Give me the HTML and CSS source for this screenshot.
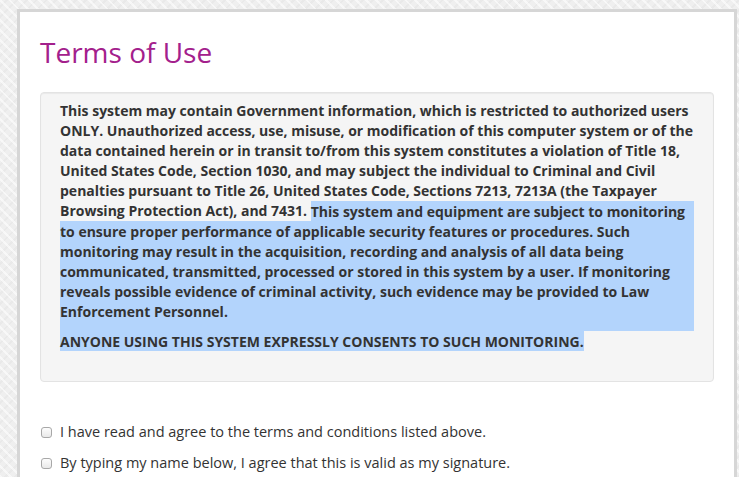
FILE: index.html
```html
<!DOCTYPE html>
<html>
<head>
<meta charset="utf-8">
<link rel="stylesheet" href="styles.css">
</head>
<body>
<div class="panel">
  <h1 class="title">Terms of Use</h1>
  <div class="well">
    <div class="sel sel-a"></div>
    <div class="sel sel-b"></div>
    <p class="terms">This system may contain Government information, which is restricted to authorized users<br>ONLY. Unauthorized access, use, misuse, or modification of this computer system or of the<br>data contained herein or in transit to/from this system constitutes a violation of Title 18,<br>United States Code, Section 1030, and may subject the individual to Criminal and Civil<br>penalties pursuant to Title 26, United States Code, Sections 7213, 7213A (the Taxpayer<br>Browsing Protection Act), and 7431. <span class="hl">This system and equipment are subject to monitoring<br>to ensure proper performance of applicable security features or procedures. Such<br>monitoring may result in the acquisition, recording and analysis of all data being<br>communicated, transmitted, processed or stored in this system by a user. If monitoring<br>reveals possible evidence of criminal activity, such evidence may be provided to Law<br>Enforcement Personnel.</span></p>
    <p class="terms"><span class="hl">ANYONE USING THIS SYSTEM EXPRESSLY CONSENTS TO SUCH MONITORING.</span></p>
  </div>
  <div class="checks">
    <label class="check"><input type="checkbox" class="box"><span>I have read and agree to the terms and conditions listed above.</span></label>
    <label class="check"><input type="checkbox" class="box"><span>By typing my name below, I agree that this is valid as my signature.</span></label>
  </div>
</div>
</body>
</html>
```

FILE: styles.css
```css
html, body {
  margin: 0;
  padding: 0;
}
body {
  background-color: #efefef;
  background-image:
    repeating-linear-gradient(45deg, rgba(255,255,255,0.55) 0 2px, transparent 2px 7px),
    repeating-linear-gradient(-45deg, rgba(0,0,0,0.025) 0 2px, transparent 2px 7px);
  font-family: "Open Sans", "DejaVu Sans", sans-serif;
  color: #333;
  height: 477px;
  overflow: hidden;
}
.panel {
  margin: 9px 0 0 17px;
  width: 720px;
  background: #fff;
  border: 3px solid #d6d6d6;
  border-bottom: none;
  padding: 25px 20px 20px 20px;
  box-sizing: border-box;
  height: 480px;
}
.title {
  margin: 0 0 24px 0;
  font-size: 28px;
  line-height: 31px;
  font-weight: 400;
  color: #a3208c;
}
.well {
  position: relative;
  background: #f5f5f5;
  border: 1px solid #e3e3e3;
  border-radius: 4px;
  box-shadow: inset 0 1px 1px rgba(0,0,0,0.05);
  padding: 8px 19px 20px 19px;
}
.sel {
  position: absolute;
  background: #b3d4fc;
}
.sel-a {
  left: 459px;
  width: 194px;
  top: 108px;
  height: 20px;
}
.sel-b {
  left: 19px;
  width: 634px;
  top: 128px;
  height: 110px;
}
.terms {
  position: relative;
  margin: 0 0 10px 0;
  font-size: 14px;
  line-height: 20px;
  font-weight: 700;
  color: #333;
  white-space: nowrap;
}
.hl {
  background: #b3d4fc;
  padding: 0.5px 0;
}
.checks {
  margin-top: 40px;
  display: flex;
  flex-direction: column;
  gap: 11px;
}
.check {
  display: flex;
  align-items: center;
  gap: 8px;
  font-size: 14.5px;
  line-height: 20px;
  color: #333;
}
.box {
  appearance: none;
  -webkit-appearance: none;
  margin: 0 0 0 1px;
  width: 11px;
  height: 11px;
  border: 1px solid #a8a8a8;
  border-radius: 3px;
  background: linear-gradient(#fdfdfd, #e9e9e9);
  box-sizing: border-box;
  flex: none;
}
```
